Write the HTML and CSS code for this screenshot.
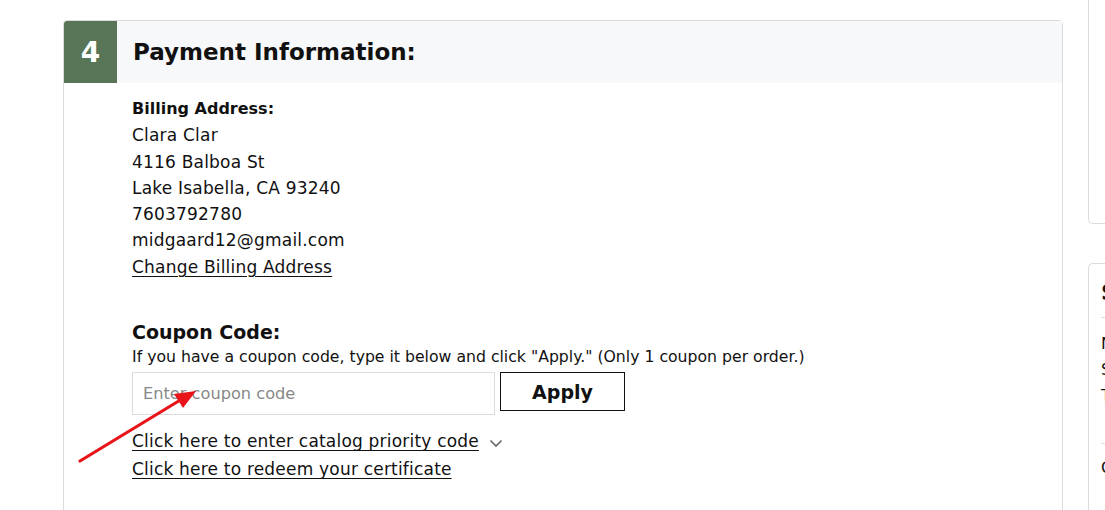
FILE: index.html
```html
<!DOCTYPE html>
<html lang="en">
<head>
    <meta charset="UTF-8">
    <meta name="viewport" content="width=device-width, initial-scale=1.0">
    <title>Checkout - Payment Information</title>
    <link rel="stylesheet" href="styles.css">
</head>
<body>
    <div class="page">
        <div class="main">
            <div class="step-card">
                <div class="step-head">
                    <div class="step-num">4</div>
                    <h2 class="step-title">Payment Information:</h2>
                </div>
                <div class="step-body">
                    <div class="billing">
                        <div class="label">Billing Address:</div>
                        <div>Clara Clar</div>
                        <div>4116 Balboa St</div>
                        <div>Lake Isabella, CA 93240</div>
                        <div>7603792780</div>
                        <div>midgaard12@gmail.com</div>
                        <a href="#" class="link">Change Billing Address</a>
                    </div>

                    <div class="coupon">
                        <h3>Coupon Code:</h3>
                        <p class="hint">If you have a coupon code, type it below and click "Apply." (Only 1 coupon per order.)</p>
                        <div class="coupon-row">
                            <input type="text" placeholder="Enter coupon code">
                            <button>Apply</button>
                        </div>
                        <div class="extra-links">
                            <a href="#" class="link">Click here to enter catalog priority code</a>
                            <svg class="chev" width="14" height="9" viewBox="0 0 14 9"><path d="M1.5 1.5 L7 7 L12.5 1.5" fill="none" stroke="#666" stroke-width="1.6"/></svg>
                        </div>
                        <div class="extra-links">
                            <a href="#" class="link">Click here to redeem your certificate</a>
                        </div>
                    </div>
                </div>
            </div>
            <!-- annotation arrow -->
            <svg class="arrow" width="120" height="80" viewBox="0 0 120 80">
                <line x1="2" y1="76" x2="104" y2="14" stroke="#e8141a" stroke-width="3.2" stroke-linecap="round"/>
                <polygon points="118,6 96,9 105,23" fill="#e8141a"/>
            </svg>
        </div>

        <div class="side">
            <div class="side-card top"></div>
            <div class="side-card summary">
                <h3>S</h3>
                <div class="rows">
                    <div>N</div>
                    <div>S</div>
                    <div>T</div>
                </div>
                <div class="foot">C</div>
            </div>
        </div>
    </div>
</body>
</html>
```

FILE: styles.css
```css
body {
    margin: 0;
    padding: 0;
    background: #fff;
    font-family: 'DejaVu Sans', 'Noto Sans', sans-serif;
    color: #111;
    overflow: hidden;
}
.page {
    display: flex;
    gap: 25px;
    padding-left: 63px;
    height: 510px;
}
.main {
    width: 1000px;
    flex-shrink: 0;
    position: relative;
    padding-top: 20px;
}
.step-card {
    border: 1px solid #dcdcdc;
    border-radius: 4px 4px 0 0;
    height: 520px;
    box-sizing: border-box;
}
.step-head {
    display: flex;
    align-items: center;
    background: #f7f8f9;
    height: 62px;
}
.step-num {
    width: 53px;
    height: 62px;
    background: #587557;
    color: #fff;
    font-size: 28px;
    font-weight: bold;
    display: flex;
    align-items: center;
    justify-content: center;
    border-top-left-radius: 3px;
}
.step-title {
    margin: 0 0 0 16px;
    font-size: 23px;
    font-weight: bold;
    color: #111;
}
.step-body {
    padding: 13px 0 0 68px;
    font-size: 17px;
    letter-spacing: 0.2px;
}
.billing {
    line-height: 26.3px;
}
.label {
    font-weight: bold;
    font-size: 16px;
    letter-spacing: 0;
}
.link {
    color: #111;
    text-decoration: underline;
    text-underline-offset: 3px;
}
.coupon {
    margin-top: 38px;
}
.coupon h3 {
    margin: 0;
    font-size: 19px;
    line-height: 28px;
    letter-spacing: 0;
}
.hint {
    margin: 0 0 4px;
    font-size: 15.7px;
    letter-spacing: 0;
    line-height: 22px;
}
.coupon-row {
    display: flex;
    align-items: flex-start;
    gap: 5px;
}
.coupon-row input {
    width: 363px;
    height: 43px;
    box-sizing: border-box;
    border: 1px solid #dcdcdc;
    padding: 0 10px;
    font-family: inherit;
    font-size: 16.2px;
    color: #333;
}
.coupon-row input::placeholder {
    color: #888;
}
.coupon-row button {
    width: 125px;
    height: 39px;
    background: #fff;
    border: 1.5px solid #111;
    font-family: inherit;
    font-size: 19px;
    font-weight: bold;
    color: #111;
    cursor: pointer;
}
.extra-links {
    display: flex;
    align-items: center;
    gap: 10px;
    line-height: 28px;
}
.coupon-row + .extra-links {
    margin-top: 12px;
}
.chev {
    margin-top: 4px;
}
.arrow {
    position: absolute;
    left: 15px;
    top: 385px;
}
.side {
    width: 40px;
    flex-shrink: 0;
}
.side-card {
    border: 1px solid #dcdcdc;
    border-right: none;
    background: #fff;
}
.side-card.top {
    border-top: none;
    height: 224px;
    box-sizing: border-box;
    border-radius: 0 0 0 5px;
}
.side-card.summary {
    margin-top: 39px;
    border-bottom: none;
    border-radius: 5px 0 0 0;
    padding-left: 12px;
    height: 260px;
    font-size: 16px;
}
.summary h3 {
    margin: 0;
    padding: 16px 0 12px;
    font-size: 22px;
    border-bottom: 1px solid #ddd;
}
.summary .rows {
    padding: 13px 0 34px;
    line-height: 26px;
    border-bottom: 1px solid #ddd;
}
.summary .foot {
    padding-top: 14px;
}
```
